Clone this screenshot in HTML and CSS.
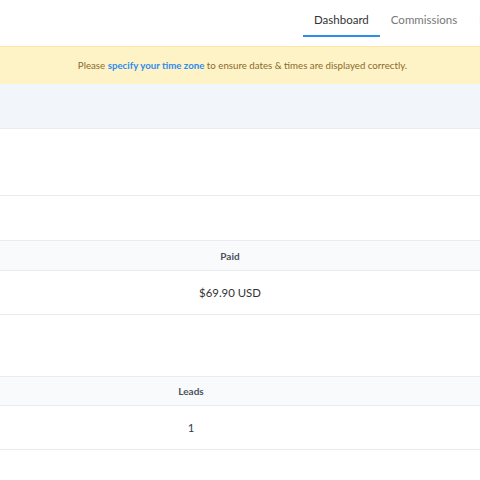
FILE: index.html
```html
<!DOCTYPE html>
<html lang="en">
<head>
    <meta charset="UTF-8">
    <meta name="viewport" content="width=device-width, initial-scale=1.0">
    <title>Dashboard</title>
    <link rel="stylesheet" href="styles.css">
</head>
<body>
    <div class="page">
        <div class="nav">
            <a href="#" class="tab active">Dashboard</a>
            <a href="#" class="tab">Commissions</a>
            <a href="#" class="tab">Payouts</a>
        </div>
        <div class="notice">
            Please <a href="#">specify your time zone</a> to ensure dates &amp; times are displayed correctly.
        </div>
        <div class="toolbar"></div>
        <div class="panel"></div>

        <div class="section">
            <table class="stats stats-paid">
                <colgroup><col class="c1"><col class="c2"></colgroup>
                <thead>
                    <tr><th>Paid</th><th></th></tr>
                </thead>
                <tbody>
                    <tr><td>$69.90 USD</td><td></td></tr>
                </tbody>
            </table>
        </div>

        <div class="section second">
            <table class="stats stats-leads">
                <colgroup><col class="c1"><col class="c2"></colgroup>
                <thead>
                    <tr><th>Leads</th><th></th></tr>
                </thead>
                <tbody>
                    <tr><td class="num">1</td><td></td></tr>
                </tbody>
            </table>
        </div>
    </div>
</body>
</html>
```

FILE: styles.css
```css
body {
    font-family: Lato, "Open Sans", sans-serif;
    background-color: white;
    margin: 0;
    padding: 0;
    overflow: hidden;
}
.page {
    width: 480px;
    overflow: hidden;
}
.nav {
    height: 46px;
    display: flex;
    padding-left: 303px;
    box-sizing: border-box;
    white-space: nowrap;
}
.tab {
    display: block;
    padding: 13px 11px 0;
    height: 33px;
    box-sizing: content-box;
    font-size: 11.5px;
    color: #777;
    text-decoration: none;
    flex-shrink: 0;
}
.tab.active {
    color: #333;
    border-bottom: 2px solid #2d8cf0;
    height: 22px;
    margin-bottom: 9px;
}
.notice {
    background-color: #fef3c7;
    border-top: 1px solid #fde7a6;
    color: #8a6a2b;
    font-size: 9.7px;
    text-align: center;
    height: 37px;
    line-height: 37px;
    padding-left: 5px;
}
.notice a {
    color: #2d8cf0;
    font-weight: bold;
    text-decoration: none;
}
.toolbar {
    background-color: #f2f5f9;
    height: 44px;
    border-bottom: 1px solid #e8ecf1;
}
.panel {
    height: 66px;
    border-bottom: 1px solid #e8ecf1;
}
.section {
    padding-top: 44px;
}
.section.second {
    padding-top: 61px;
}
.stats {
    border-collapse: collapse;
    table-layout: fixed;
    width: 920px;
}
.stats th {
    background-color: #f9fafc;
    border-top: 1px solid #e8ecf1;
    border-bottom: 1px solid #e8ecf1;
    height: 29px;
    padding: 0;
    font-size: 10px;
    font-weight: bold;
    color: #4a5260;
}
.stats-leads th {
    height: 28px;
}
.stats td {
    height: 43px;
    padding: 0;
    text-align: center;
    font-size: 11.4px;
    color: #333;
    border-bottom: 1px solid #e8ecf1;
}
.stats td.num {
    color: #2c3e50;
}
.stats-paid .c1 {
    width: 460px;
}
.stats-leads .c1 {
    width: 382px;
}
```
